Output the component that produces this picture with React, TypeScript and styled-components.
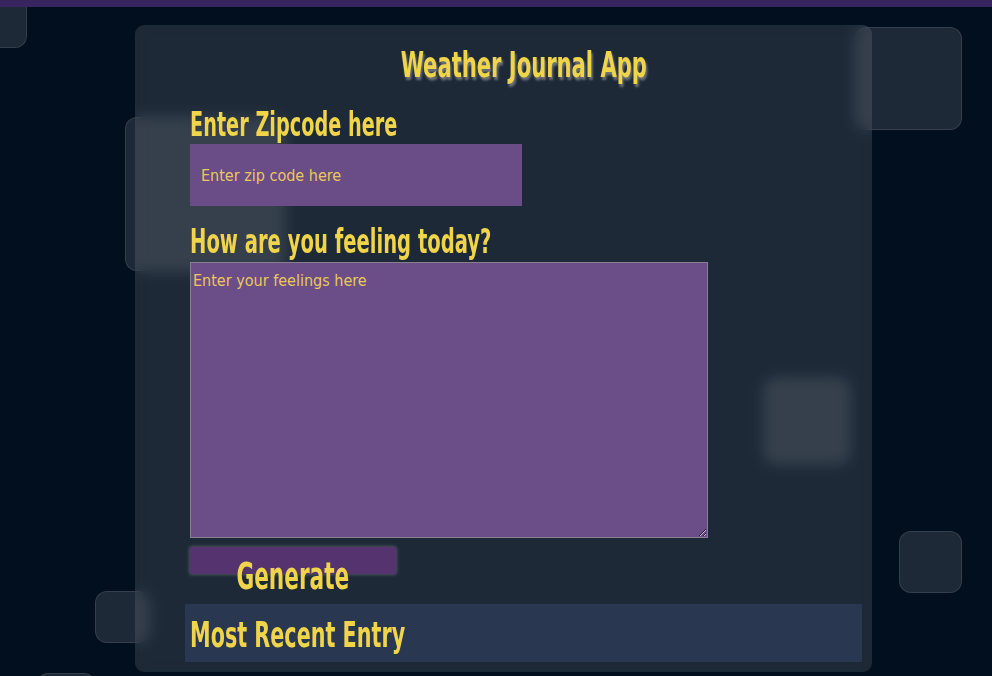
import React from 'react';
import styled, { createGlobalStyle } from 'styled-components';

const GlobalStyle = createGlobalStyle`
  html, body {
    margin: 0;
    height: 100%;
    overflow: hidden;
    background: #020f1f;
  }
  * {
    box-sizing: border-box;
  }
`;

const squares = [
  { x: -40, y: -20, w: 67, h: 68 },
  { x: 125, y: 117, w: 160, h: 154 },
  { x: 855, y: 27, w: 107, h: 103 },
  { x: 764, y: 378, w: 86, h: 86 },
  { x: 899, y: 531, w: 63, h: 62 },
  { x: 95, y: 591, w: 54, h: 52 },
  { x: 36, y: 673, w: 60, h: 60 },
];

const App = () => {
  return (
    <Page>
      <GlobalStyle />
      <TopBar />
      {squares.map((s, i) => (
        <Square key={i} $x={s.x} $y={s.y} $w={s.w} $h={s.h} />
      ))}
      <Card>
        <Title>
          <Narrow $origin="center" $scale={0.67}>Weather Journal App</Narrow>
        </Title>
        <Label htmlFor="zip">
          <Narrow $scale={0.63}>Enter Zipcode here</Narrow>
        </Label>
        <ZipInput id="zip" type="text" placeholder="Enter zip code here" />
        <Label htmlFor="feelings" $gap={15}>
          <Narrow $scale={0.64}>How are you feeling today?</Narrow>
        </Label>
        <Feelings id="feelings" placeholder="Enter your feelings here"></Feelings>
        <GenerateButton type="button">
          <Narrow $origin="center">Generate</Narrow>
        </GenerateButton>
        <Recent>
          <Narrow $scale={0.64}>Most Recent Entry</Narrow>
        </Recent>
      </Card>
    </Page>
  );
};

export default App;

const font = `"DejaVu Sans Condensed", "Liberation Sans", sans-serif`;

const Page = styled.div`
  position: relative;
  height: 100vh;
  overflow: hidden;
  display: flex;
  flex-direction: column;
  font-family: ${font};
`;

const TopBar = styled.div`
  height: 7px;
  background: #38255f;
  position: relative;
  z-index: 2;
`;

const Square = styled.div<{ $x: number; $y: number; $w: number; $h: number }>`
  position: absolute;
  left: ${(p) => p.$x}px;
  top: ${(p) => p.$y}px;
  width: ${(p) => p.$w}px;
  height: ${(p) => p.$h}px;
  border-radius: 12px;
  background: rgba(255, 255, 255, 0.11);
  border: 1px solid rgba(255, 255, 255, 0.1);
`;

// the headings use a tall condensed face; squeeze the condensed sans to match
const Narrow = styled.span<{ $origin?: string; $scale?: number }>`
  display: inline-block;
  white-space: nowrap;
  transform: scaleX(${(p) => p.$scale ?? 0.65});
  transform-origin: ${(p) => p.$origin ?? 'left'} center;
`;

const Card = styled.main`
  position: relative;
  z-index: 1;
  flex-shrink: 0;
  width: 737px;
  margin: 18px 0 0 135px;
  padding: 20px 10px 10px 50px;
  border-radius: 9px;
  background: rgba(255, 255, 255, 0.11);
  backdrop-filter: blur(7px);
  display: flex;
  flex-direction: column;
  align-items: flex-start;
`;

const Title = styled.h1`
  align-self: stretch;
  margin: 0;
  font-size: 35px;
  line-height: 40px;
  font-weight: bold;
  text-align: center;
  color: #f0d54a;
  text-shadow: 2px 3px 3px rgba(170, 170, 170, 0.6);
`;

const Label = styled.label<{ $gap?: number }>`
  display: block;
  margin: ${(p) => p.$gap ?? 19}px 0 0 5px;
  font-size: 34px;
  line-height: 40px;
  font-weight: bold;
  color: #f0d54a;
`;

const ZipInput = styled.input`
  width: 332px;
  height: 62px;
  margin-left: 5px;
  padding: 0 11px;
  border: none;
  outline: none;
  background: #6a4c87;
  font-family: ${font};
  font-size: 16px;
  color: #e9c95b;

  &::placeholder {
    color: #e9c95b;
  }
`;

const Feelings = styled.textarea`
  width: 518px;
  height: 276px;
  margin: 1px 0 0 5px;
  padding: 8px 2px 2px;
  border: 1px solid #86808f;
  outline: none;
  background: #6b4e88;
  font-family: ${font};
  font-size: 16px;
  color: #e9c95b;

  &::placeholder {
    color: #e9c95b;
  }
`;

const GenerateButton = styled.button`
  display: flex;
  justify-content: center;
  align-items: flex-start;
  width: 206px;
  height: 27px;
  margin: 9px 0 0 5px;
  padding: 11px 0 0;
  border: none;
  background: #54336f;
  box-shadow: 0 0 4px rgba(200, 200, 200, 0.45);
  font-family: ${font};
  font-size: 37px;
  line-height: 37px;
  font-weight: bold;
  color: #f0d54a;
  overflow: visible;
  cursor: pointer;
`;

const Recent = styled.section`
  align-self: stretch;
  height: 58px;
  margin-top: 30px;
  padding: 4px 0 0 5px;
  background: #293750;
  font-size: 36px;
  line-height: 54px;
  font-weight: bold;
  color: #f0d54a;
`;
